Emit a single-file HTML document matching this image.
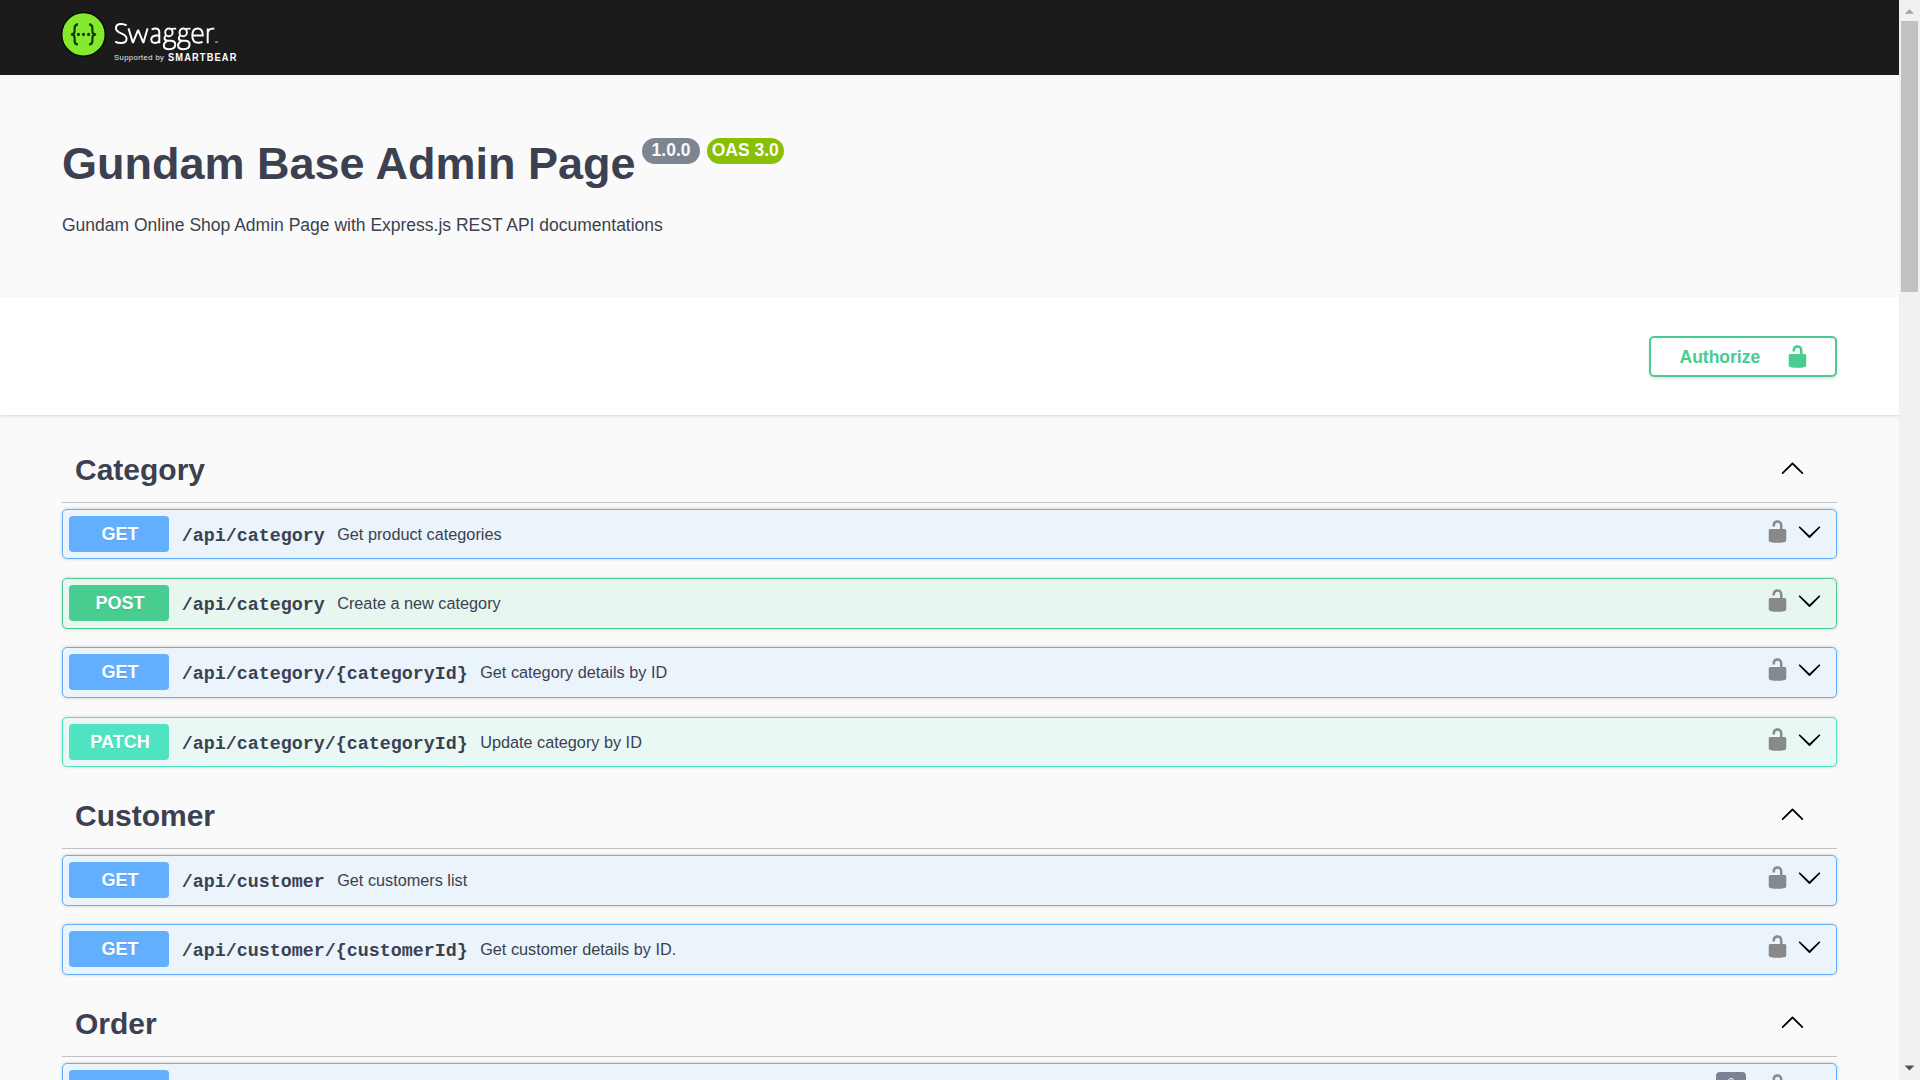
<!DOCTYPE html>
<html><head><meta charset="utf-8"><title>Swagger UI</title>
<style>
*{box-sizing:border-box;margin:0;padding:0}
html,body{width:1920px;height:1080px;overflow:hidden;background:#fafafa;font-family:"Liberation Sans",sans-serif;color:#3b4151}
.abs{position:absolute}
#topbar{position:absolute;left:0;top:0;width:1899px;height:75px;background:#1b1b1b}
#scheme{position:absolute;left:0;top:297px;width:1899px;height:118px;background:#fff;box-shadow:0 1.25px 2.5px 0 rgba(0,0,0,.15)}
#sb{position:absolute;left:1899px;top:0;width:21px;height:1080px;background:#f1f1f1}
#thumb{position:absolute;left:1901px;top:21px;width:17px;height:271px;background:#c1c1c1}
.title{position:absolute;left:62px;font-weight:bold;font-size:45px;line-height:52px;white-space:nowrap}
.badge{position:absolute;height:25.5px;border-radius:57px;color:#fafafa;font-weight:bold;font-size:17.5px;line-height:25.5px;text-align:center}
.desc{position:absolute;left:62px;font-size:17.5px;line-height:20px;white-space:nowrap}
.auth{position:absolute;left:1649px;top:336px;width:188px;height:40.5px;border:2.5px solid #49cc90;border-radius:5px;background:#fff;box-shadow:0 1.25px 2.5px rgba(0,0,0,.1);color:#49cc90;font-weight:bold;font-size:17.5px}
.auth span{position:absolute;left:28.5px;top:9px;line-height:20px}
.auth svg{position:absolute;left:133.8px;top:5.5px}
.tag{position:absolute;left:62px;width:1775px;height:63px;border-bottom:1px solid rgba(59,65,81,.3)}
.tag h3{position:absolute;left:13px;top:12.2px;font-size:30px;line-height:36px;font-weight:bold;white-space:nowrap}
.tag svg{position:absolute;left:1717.75px;top:15px}
.op{position:absolute;left:62px;width:1775px;height:50.6px;border:1px solid;border-radius:5px;box-shadow:0 0 3.75px rgba(0,0,0,.19)}
.op.get{background:#ebf3fb;border-color:#61affe}
.op.post{background:#e8f6f0;border-color:#49cc90}
.op.patch{background:#e9f8f5;border-color:#50e3c2}
.m{position:absolute;left:6.3px;top:6.3px;width:99.4px;height:35.5px;border-radius:3.75px;color:#fff;font-weight:bold;font-size:18px;line-height:35.5px;padding-left:2px;padding-top:0.5px;text-align:center;text-shadow:0 1.25px 0 rgba(0,0,0,.1)}
.get .m{background:#61affe}
.post .m{background:#49cc90}
.patch .m{background:#50e3c2}
.path{position:absolute;left:118.7px;top:16.3px;font-family:"Liberation Mono",monospace;font-weight:bold;font-size:18.33px;line-height:22px;white-space:nowrap;color:#3b4151}
.sum{position:absolute;top:13.8px;font-size:16.25px;line-height:20px;white-space:nowrap;color:#3b4151}
.lock{position:absolute;left:1701.75px;top:8.5px}
.chev{position:absolute;left:1734px;top:8.5px}
</style></head><body>
<div id="topbar">
  <svg class="abs" style="left:0;top:0" width="110" height="75" viewBox="0 0 110 75">
    <circle cx="83.5" cy="34.4" r="21.8" fill="#85ea2d" stroke="#050c04" stroke-width="1.5"/>
    <g fill="none" stroke="#0b3b12" stroke-width="2.2" stroke-linecap="butt">
      <path d="M78 24.4C75.3 24.4 74.6 25.8 74.6 28V31.6C74.6 33.4 73.3 34.5 70.8 34.5C73.3 34.5 74.6 35.6 74.6 37.4V41C74.6 43 75.3 44.4 78 44.4"/>
      <path d="M89 24.4C91.7 24.4 92.4 25.8 92.4 28V31.6C92.4 33.4 93.7 34.5 96.2 34.5C93.7 34.5 92.4 35.6 92.4 37.4V41C92.4 43 91.7 44.4 89 44.4"/>
    </g>
    <g fill="#0b2e0e"><circle cx="78.4" cy="34.4" r="1.55"/><circle cx="83.5" cy="34.4" r="1.55"/><circle cx="88.6" cy="34.4" r="1.55"/></g>
  </svg>
  <svg class="abs" id="swg" style="left:0;top:0" width="240" height="75" viewBox="0 0 240 75">
    <g fill="none" stroke="#fff" stroke-width="1.95" stroke-linecap="butt" stroke-linejoin="miter">
      <path d="M126.6 25.3C124.9 24.3 123 23.9 121.2 23.9C117.9 23.9 115.9 25.6 115.9 28.3C115.9 31 118 32 121.2 33.3C124.6 34.6 126.6 35.8 126.6 38.7C126.6 41.5 124.3 43 121 43C118.7 43 116.6 42.5 115.2 41.6"/>
      <path stroke-linejoin="bevel" d="M128.5 28.4L132.9 42.9L138.1 29.8L143.3 42.9L147.6 28.4"/>
      <path d="M151.6 29.5C152.9 28.8 154.2 28.5 155.5 28.5C158.2 28.5 159.3 29.8 159.3 32.3V43.2M159.3 35.3C154 35.3 151.3 36.4 151.3 39.3C151.3 41.4 152.7 42.9 155 42.9C157.3 42.9 158.6 41.8 159.3 40.3"/>
      <g id="g1">
        <ellipse cx="168.9" cy="32.4" rx="3.7" ry="3.9"/>
        <path d="M171.2 28.9L176.2 28.6"/>
        <path d="M166.2 35.3C165 36.2 164.5 37.2 164.5 38.3C164.5 40 165.6 40.7 167.6 40.7H170.8C173.9 40.7 175.3 42 175.3 44.6C175.3 47.6 172.9 49.2 169.1 49.2C165.6 49.2 163.8 47.8 163.8 45.5C163.8 43.6 165 42 167 41.1"/>
      </g>
      <use href="#g1" x="14.3"/>
      <path d="M192.5 35.5H202.8C202.8 31 200.8 28.6 197.5 28.6C194 28.6 192.3 31.4 192.3 35.7C192.3 40.2 194.4 42.8 198.3 42.8C200 42.8 201.3 42.5 202.6 41.9"/>
      <path d="M207.7 28.5V43.2M207.7 32.8C208.5 30 210.3 28.6 212.6 28.6C213.2 28.6 213.8 28.7 214.3 28.8"/>
    </g>
  </svg>
  <div class="abs" style="left:215px;top:41px;width:3px;height:1.5px;background:#777"></div>
  <div class="abs" id="sup" style="left:114px;top:53.3px;color:#e8e8e8;font-size:7.7px;line-height:10px;letter-spacing:0.38px;white-space:nowrap">Supported by</div>
  <div class="abs" id="smb" style="left:167.7px;top:52.3px;color:#fff;font-size:10px;font-weight:bold;line-height:12px;letter-spacing:1.2px;transform:scaleX(0.93);transform-origin:0 0;white-space:nowrap">SMARTBEAR</div>
</div>
<div class="title" style="top:138px">Gundam Base Admin Page</div>
<div class="badge" style="left:642.4px;top:138.25px;width:57.4px;background:#7d8492">1.0.0</div>
<div class="badge" style="left:707px;top:138.25px;width:76.6px;background:#89bf04">OAS 3.0</div>
<div class="desc" style="top:215.3px">Gundam Online Shop Admin Page with Express.js REST API documentations</div>

<div id="scheme"></div>
<div class="auth"><span>Authorize</span>
<svg width="25" height="25" viewBox="0 0 20 20" fill="#49cc90"><path d="M15.8 8H14V5.6C14 2.703 12.665 1 10 1 7.334 1 6 2.703 6 5.6V6h2v-.801C8 3.754 8.797 3 10 3c1.203 0 2 .754 2 2.199V8H4c-.553 0-1 .646-1 1.199V17c0 .549.428 1.139.951 1.307l1.197.387C5.672 18.861 6.55 19 7.1 19h5.8c.549 0 1.428-.139 1.951-.307l1.196-.387c.524-.167.953-.757.953-1.306V9.199C17 8.646 16.352 8 15.8 8z"/></svg>
</div>

<div class="tag" style="top:440px"><h3>Category</h3><svg width="25" height="25" viewBox="0 0 20 20"><path d="M17.418 14.908c.272.268.709.268.979 0s.271-.701 0-.969l-7.908-7.83c-.27-.268-.707-.268-.979 0l-7.908 7.83c-.27.268-.27.701 0 .969.271.268.709.268.979 0L10 7.767l7.418 7.141z"/></svg></div>
<div class="op get" style="top:509px;height:50px"><div class="m">GET</div><div class="path">/api/category</div><div class="sum" style="left:274.2px">Get product categories</div><svg class="lock" width="25" height="25" viewBox="0 0 20 20" fill="#7e7e7e" opacity=".9"><path d="M15.8 8H14V5.6C14 2.703 12.665 1 10 1 7.334 1 6 2.703 6 5.6V6h2v-.801C8 3.754 8.797 3 10 3c1.203 0 2 .754 2 2.199V8H4c-.553 0-1 .646-1 1.199V17c0 .549.428 1.139.951 1.307l1.197.387C5.672 18.861 6.55 19 7.1 19h5.8c.549 0 1.428-.139 1.951-.307l1.196-.387c.524-.167.953-.757.953-1.306V9.199C17 8.646 16.352 8 15.8 8z"/></svg><svg class="chev" width="25" height="25" viewBox="0 0 20 20"><path d="M17.418 6.109c.272-.268.709-.268.979 0s.271.701 0 .969l-7.908 7.83c-.27.268-.707.268-.979 0l-7.908-7.83c-.27-.268-.27-.701 0-.969.271-.268.709-.268.979 0L10 13.25l7.418-7.141z"/></svg></div>
<div class="op post" style="top:578px;height:51px"><div class="m">POST</div><div class="path">/api/category</div><div class="sum" style="left:274.2px">Create a new category</div><svg class="lock" width="25" height="25" viewBox="0 0 20 20" fill="#7e7e7e" opacity=".9"><path d="M15.8 8H14V5.6C14 2.703 12.665 1 10 1 7.334 1 6 2.703 6 5.6V6h2v-.801C8 3.754 8.797 3 10 3c1.203 0 2 .754 2 2.199V8H4c-.553 0-1 .646-1 1.199V17c0 .549.428 1.139.951 1.307l1.197.387C5.672 18.861 6.55 19 7.1 19h5.8c.549 0 1.428-.139 1.951-.307l1.196-.387c.524-.167.953-.757.953-1.306V9.199C17 8.646 16.352 8 15.8 8z"/></svg><svg class="chev" width="25" height="25" viewBox="0 0 20 20"><path d="M17.418 6.109c.272-.268.709-.268.979 0s.271.701 0 .969l-7.908 7.83c-.27.268-.707.268-.979 0l-7.908-7.83c-.27-.268-.27-.701 0-.969.271-.268.709-.268.979 0L10 13.25l7.418-7.141z"/></svg></div>
<div class="op get" style="top:647px;height:51px"><div class="m">GET</div><div class="path">/api/category/{categoryId}</div><div class="sum" style="left:417.2px">Get category details by ID</div><svg class="lock" width="25" height="25" viewBox="0 0 20 20" fill="#7e7e7e" opacity=".9"><path d="M15.8 8H14V5.6C14 2.703 12.665 1 10 1 7.334 1 6 2.703 6 5.6V6h2v-.801C8 3.754 8.797 3 10 3c1.203 0 2 .754 2 2.199V8H4c-.553 0-1 .646-1 1.199V17c0 .549.428 1.139.951 1.307l1.197.387C5.672 18.861 6.55 19 7.1 19h5.8c.549 0 1.428-.139 1.951-.307l1.196-.387c.524-.167.953-.757.953-1.306V9.199C17 8.646 16.352 8 15.8 8z"/></svg><svg class="chev" width="25" height="25" viewBox="0 0 20 20"><path d="M17.418 6.109c.272-.268.709-.268.979 0s.271.701 0 .969l-7.908 7.83c-.27.268-.707.268-.979 0l-7.908-7.83c-.27-.268-.27-.701 0-.969.271-.268.709-.268.979 0L10 13.25l7.418-7.141z"/></svg></div>
<div class="op patch" style="top:717px;height:50px"><div class="m">PATCH</div><div class="path">/api/category/{categoryId}</div><div class="sum" style="left:417.2px">Update category by ID</div><svg class="lock" width="25" height="25" viewBox="0 0 20 20" fill="#7e7e7e" opacity=".9"><path d="M15.8 8H14V5.6C14 2.703 12.665 1 10 1 7.334 1 6 2.703 6 5.6V6h2v-.801C8 3.754 8.797 3 10 3c1.203 0 2 .754 2 2.199V8H4c-.553 0-1 .646-1 1.199V17c0 .549.428 1.139.951 1.307l1.197.387C5.672 18.861 6.55 19 7.1 19h5.8c.549 0 1.428-.139 1.951-.307l1.196-.387c.524-.167.953-.757.953-1.306V9.199C17 8.646 16.352 8 15.8 8z"/></svg><svg class="chev" width="25" height="25" viewBox="0 0 20 20"><path d="M17.418 6.109c.272-.268.709-.268.979 0s.271.701 0 .969l-7.908 7.83c-.27.268-.707.268-.979 0l-7.908-7.83c-.27-.268-.27-.701 0-.969.271-.268.709-.268.979 0L10 13.25l7.418-7.141z"/></svg></div>
<div class="tag" style="top:786px"><h3>Customer</h3><svg width="25" height="25" viewBox="0 0 20 20"><path d="M17.418 14.908c.272.268.709.268.979 0s.271-.701 0-.969l-7.908-7.83c-.27-.268-.707-.268-.979 0l-7.908 7.83c-.27.268-.27.701 0 .969.271.268.709.268.979 0L10 7.767l7.418 7.141z"/></svg></div>
<div class="op get" style="top:855px;height:51px"><div class="m">GET</div><div class="path">/api/customer</div><div class="sum" style="left:274.2px">Get customers list</div><svg class="lock" width="25" height="25" viewBox="0 0 20 20" fill="#7e7e7e" opacity=".9"><path d="M15.8 8H14V5.6C14 2.703 12.665 1 10 1 7.334 1 6 2.703 6 5.6V6h2v-.801C8 3.754 8.797 3 10 3c1.203 0 2 .754 2 2.199V8H4c-.553 0-1 .646-1 1.199V17c0 .549.428 1.139.951 1.307l1.197.387C5.672 18.861 6.55 19 7.1 19h5.8c.549 0 1.428-.139 1.951-.307l1.196-.387c.524-.167.953-.757.953-1.306V9.199C17 8.646 16.352 8 15.8 8z"/></svg><svg class="chev" width="25" height="25" viewBox="0 0 20 20"><path d="M17.418 6.109c.272-.268.709-.268.979 0s.271.701 0 .969l-7.908 7.83c-.27.268-.707.268-.979 0l-7.908-7.83c-.27-.268-.27-.701 0-.969.271-.268.709-.268.979 0L10 13.25l7.418-7.141z"/></svg></div>
<div class="op get" style="top:924px;height:51px"><div class="m">GET</div><div class="path">/api/customer/{customerId}</div><div class="sum" style="left:417.2px">Get customer details by ID.</div><svg class="lock" width="25" height="25" viewBox="0 0 20 20" fill="#7e7e7e" opacity=".9"><path d="M15.8 8H14V5.6C14 2.703 12.665 1 10 1 7.334 1 6 2.703 6 5.6V6h2v-.801C8 3.754 8.797 3 10 3c1.203 0 2 .754 2 2.199V8H4c-.553 0-1 .646-1 1.199V17c0 .549.428 1.139.951 1.307l1.197.387C5.672 18.861 6.55 19 7.1 19h5.8c.549 0 1.428-.139 1.951-.307l1.196-.387c.524-.167.953-.757.953-1.306V9.199C17 8.646 16.352 8 15.8 8z"/></svg><svg class="chev" width="25" height="25" viewBox="0 0 20 20"><path d="M17.418 6.109c.272-.268.709-.268.979 0s.271.701 0 .969l-7.908 7.83c-.27.268-.707.268-.979 0l-7.908-7.83c-.27-.268-.27-.701 0-.969.271-.268.709-.268.979 0L10 13.25l7.418-7.141z"/></svg></div>
<div class="tag" style="top:994px"><h3>Order</h3><svg width="25" height="25" viewBox="0 0 20 20"><path d="M17.418 14.908c.272.268.709.268.979 0s.271-.701 0-.969l-7.908-7.83c-.27-.268-.707-.268-.979 0l-7.908 7.83c-.27.268-.27.701 0 .969.271.268.709.268.979 0L10 7.767l7.418 7.141z"/></svg></div>
<div class="op get" style="top:1063px;height:51px"><div class="m">GET</div><div class="path">/api/order</div><div class="sum" style="left:241.2px">Get orders list</div><svg class="lock" width="25" height="25" viewBox="0 0 20 20" fill="#7e7e7e" opacity=".9"><path d="M15.8 8H14V5.6C14 2.703 12.665 1 10 1 7.334 1 6 2.703 6 5.6V6h2v-.801C8 3.754 8.797 3 10 3c1.203 0 2 .754 2 2.199V8H4c-.553 0-1 .646-1 1.199V17c0 .549.428 1.139.951 1.307l1.197.387C5.672 18.861 6.55 19 7.1 19h5.8c.549 0 1.428-.139 1.951-.307l1.196-.387c.524-.167.953-.757.953-1.306V9.199C17 8.646 16.352 8 15.8 8z"/></svg><svg class="chev" width="25" height="25" viewBox="0 0 20 20"><path d="M17.418 6.109c.272-.268.709-.268.979 0s.271.701 0 .969l-7.908 7.83c-.27.268-.707.268-.979 0l-7.908-7.83c-.27-.268-.27-.701 0-.969.271-.268.709-.268.979 0L10 13.25l7.418-7.141z"/></svg><div style="position:absolute;left:1653px;top:8px;width:30px;height:30px;border-radius:4px;background:#7d8293"><div style="position:absolute;left:12px;top:5.5px;width:6px;height:6px;border:1.5px solid #fff;border-radius:50%"></div></div></div>


<div id="sb"></div>
<div id="thumb"></div>
<svg class="abs" style="left:1899px;top:0" width="21" height="21" viewBox="0 0 21 21"><path d="M5.8 13.8L10.4 9.2L15 13.8Z" fill="#a3a3a3"/></svg>
<svg class="abs" style="left:1899px;top:1059px" width="21" height="21" viewBox="0 0 21 21"><path d="M5.6 6.6L15.4 6.6L10.5 11.6Z" fill="#505050"/></svg>
</body></html>
